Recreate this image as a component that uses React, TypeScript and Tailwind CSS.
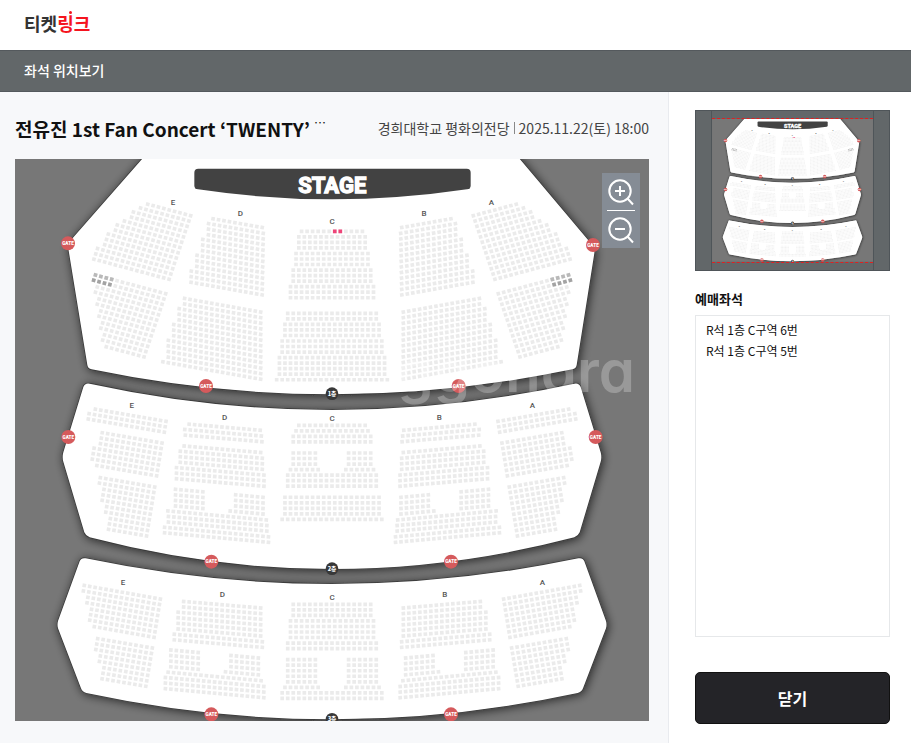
import React from 'react'

type Block = {
  x: number
  y: number
  // step from one seat to the next, and from one row to the next
  seat: [number, number]
  row: [number, number]
  // one entry per row: start, count pairs
  rows: number[][]
}

const CENTER = 951

const range = (counts: number[]) => counts.map((n) => (n ? [0, n] : []))
const centered = (counts: number[]) => counts.map((n) => (n ? [-(n - 1) / 2, n] : []))

// left half of the hall, anchored on the right end of the rows; mirrored for the right half
const sideBlocks: Block[] = [
  // 1F
  { x: 527, y: 170, seat: [-16.1, -4.3], row: [-5.4, 15.9], rows: range([9, 10, 11, 11, 12, 13, 13, 14, 14, 14, 15, 15, 15]) },
  { x: 452, y: 404, seat: [-16.2, -4.3], row: [-5.4, 15.8], rows: range([14, 14, 13, 13, 12, 12, 11, 11, 10, 10, 9, 9, 8]) },
  { x: 745, y: 206, seat: [-16.4, -2.9], row: [-0.3, 16.8], rows: [[0.2, 10], ...range([11, 11, 11, 12, 12, 12, 13, 13, 13, 14, 14, 14])] },
  { x: 737, y: 459, seat: [-16.3, -2.9], row: [0, 16.8], rows: range([15, 15, 16, 16, 16, 17, 17, 17, 18, 18, 18, 18, 19]) },
  // 2F
  { x: 453, y: 787, seat: [-16.3, -2.8], row: [-2.5, 16.2], rows: range([14, 15, 15]) },
  { x: 441, y: 852, seat: [-16.3, -2.8], row: [-2.7, 16.4], rows: range([12, 12, 12, 13, 13, 13, 12]) },
  { x: 419, y: 984, seat: [-16.3, -2.8], row: [-2.7, 16.3], rows: range([11, 11, 10, 10, 10, 9, 9, 8, 8, 8]) },
  { x: 739, y: 814, seat: [-16.4, -1.4], row: [0, 17], rows: [[0.2, 14], [0, 15], [-0.1, 15]] },
  {
    x: 742, y: 881, seat: [-16.4, -1.4], row: [0, 16.7],
    rows: [[0.3, 15], [0, 16], [0, 16], [0, 16], [-0.3, 17], [-0.3, 17], [-0.3, 17]],
  },
  {
    x: 744, y: 1015, seat: [-16.4, -1.5], row: [0, 16.7],
    rows: [
      [0, 6, 11, 6], [0, 6, 11, 6], [0, 6, 11, 6], [0, 7, 11, 6],
      [-0.6, 19], [-0.7, 19], [-0.7, 19], [-1, 20], [-1, 20],
    ],
  },
  // 3F
  { x: 436, y: 1320, seat: [-16.3, -2.9], row: [-2.7, 16.4], rows: range([15, 15, 14, 14, 13, 13, 13, 12]) },
  { x: 412, y: 1467, seat: [-16.4, -2.8], row: [-2.8, 16.4], rows: range([11, 11, 11, 10, 10, 9, 9, 9]) },
  {
    x: 737, y: 1347, seat: [-16.5, -1.4], row: [0, 16.8],
    rows: [[0, 15], [0, 15], [0, 16], [0, 16], [0, 16], [0, 16], [-0.3, 17], [-0.3, 17]],
  },
  {
    x: 730, y: 1497, seat: [-16.4, -1.5], row: [0, 16.8],
    rows: [
      [0, 6, 11, 6], [0, 6, 11, 6], [0, 6, 11, 6], [0, 7, 11, 6],
      [-0.5, 18], [-1, 19], [-1, 19], [-1, 19],
    ],
  },
]

const centerBlocks: Block[] = [
  { x: CENTER, y: 217, seat: [16.6, 0], row: [0, 16.6], rows: centered([12, 13, 13, 13, 14, 14, 14, 15, 15, 15, 16, 16, 16]) },
  { x: CENTER, y: 463, seat: [16.6, 0], row: [0, 16.6], rows: centered([17, 17, 18, 18, 18, 19, 19, 19, 20, 20, 20, 20, 21]) },
  {
    x: CENTER, y: 799, seat: [16.6, 0], row: [0, 16.6],
    rows: [
      ...centered([13, 14, 15, 15, 0]),
      [-7, 5, 3, 5], [-7, 5, 3, 5], [-7, 5, 3, 5], [-7.5, 6, 2.5, 6],
      ...centered([17, 17, 17, 0, 18, 18, 18, 18, 19]),
    ],
  },
  {
    x: CENTER, y: 1336, seat: [16.6, 0], row: [0, 16.6],
    rows: [
      ...centered([15, 15, 15, 16, 16, 16, 16, 17, 17, 0]),
      [-8, 6, 3, 6], [-8, 6, 3, 6], [-8, 6, 3, 6], [-8, 6, 3, 6], [-8, 6, 3, 6], [-8.5, 7, 2.5, 7],
      ...centered([19, 19]),
    ],
  },
]

const SIZE = 11

function seatPath(block: Block, rows = block.rows) {
  const [sx, sy] = block.seat
  const len = Math.hypot(sx, sy)
  const ux = (sx / len) * SIZE
  const uy = (sy / len) * SIZE
  let d = ''
  rows.forEach((segments, r) => {
    for (let i = 0; i < segments.length; i += 2) {
      for (let n = 0; n < segments[i + 1]; n++) {
        const c = segments[i] + n
        const x = block.x + r * block.row[0] + c * sx - (ux - uy) / 2
        const y = block.y + r * block.row[1] + c * sy - (uy + ux) / 2
        d += `M${x.toFixed(1)} ${y.toFixed(1)}l${ux.toFixed(1)} ${uy.toFixed(1)}l${(-uy).toFixed(1)} ${ux.toFixed(1)}l${(-ux).toFixed(1)} ${(-uy).toFixed(1)}z`
      }
    }
  })
  return d
}

const sideSeats = sideBlocks.map((b) => seatPath(b)).join('')
const centerSeats = centerBlocks.map((b) => seatPath(b)).join('')
const soldLight = seatPath(sideBlocks[1], [[10, 4]])
const soldDark = seatPath(sideBlocks[1], [[], [10, 4]])
const mySeats = seatPath(centerBlocks[0], [[0.5, 2]])

const floors = [
  'M390 -10L162 250Q158 262 161 275L217 618Q219 629 230 631Q951 781 1672 631Q1683 629 1685 618L1738 283Q1740 268 1730 256L1506 -10Z',
  'M205 684Q210 671 224 674Q951 832 1678 674Q1692 671 1697 684L1757 880Q1761 895 1757 908L1694 1120Q1690 1130 1678 1135Q951 1325 224 1135Q212 1130 208 1120L145 908Q141 895 145 880Z',
  'M194 1207Q199 1195 212 1198Q951 1352 1690 1198Q1703 1195 1708 1207L1773 1386Q1776 1397 1773 1408L1704 1588Q1700 1599 1688 1602Q951 1760 214 1602Q202 1599 198 1588L129 1408Q126 1397 129 1386Z',
]

const labels: [string, number, number][] = [
  ['E', 474, 138], ['D', 676, 172], ['C', 951, 196], ['B', 1227, 172], ['A', 1429, 138],
  ['E', 350, 746], ['D', 629, 782], ['C', 951, 786], ['B', 1273, 782], ['A', 1552, 748],
  ['E', 324, 1279], ['D', 622, 1315], ['C', 951, 1324], ['B', 1289, 1315], ['A', 1582, 1279],
]

const gates = [
  [159, 253], [573, 681], [1331, 681], [1734, 258],
  [160, 834], [1742, 834], [589, 1208], [1308, 1208],
  [589, 1666], [1308, 1666],
]

const levels: [string, number][] = [['1층', 704], ['2층', 1229], ['3층', 1681]]

function SeatMap({ id, seatColor = '#ebebeb' }: { id: string; seatColor?: string }) {
  return (
    <svg viewBox="0 0 1902 1686" className="block w-full" role="img" aria-label="좌석 배치도">
      <defs>
        <filter id={id} x="-10%" y="-20%" width="120%" height="140%">
          <feDropShadow dx="4" dy="4" stdDeviation="14" floodColor="#000" floodOpacity="0.65" />
        </filter>
      </defs>
      <rect width="1902" height="1686" fill="#777777" />
      {floors.map((d) => (
        <path key={d} d={d} fill="#ffffff" stroke="#3c3c3c" strokeWidth="5" filter={`url(#${id})`} />
      ))}
      {floors.map((d) => (
        <path key={d} d={d} fill="#ffffff" />
      ))}
      <path d="M550 29H1355Q1367 29 1367 41V80Q1367 89 1356 91Q951 151 549 91Q538 89 538 80V41Q538 29 550 29Z" fill="#424242" />
      <text x="952" y="101" textAnchor="middle" fill="#ffffff" stroke="#ffffff" strokeWidth="4" className="font-[Roboto,sans-serif] text-[66px] font-bold">STAGE</text>
      <g fill={seatColor}>
        <path d={centerSeats} />
        <path d={sideSeats} />
        <path d={sideSeats} transform="translate(1902 0) scale(-1 1)" />
      </g>
      {['', 'translate(1902 0) scale(-1 1)'].map((t) => (
        <g key={t} transform={t || undefined}>
          <path d={soldLight} fill="#b9b9b9" />
          <path d={soldDark} fill="#a3a3a3" />
        </g>
      ))}
      <path d={mySeats} fill="#ee4478" />
      {labels.map(([name, x, y]) => (
        <text key={`${x}-${y}`} x={x} y={y} textAnchor="middle" fill="#555555" className="font-[Roboto,sans-serif] text-[24px] font-medium">{name}</text>
      ))}
      {gates.map(([x, y]) => (
        <g key={`${x}-${y}`}>
          <circle cx={x} cy={y} r="21" fill="#d55a5c" />
          <text x={x} y={y + 5} textAnchor="middle" fill="#ffffff" className="font-[Roboto,sans-serif] text-[14px] font-black">GATE</text>
        </g>
      ))}
      {levels.map(([name, y]) => (
        <g key={name}>
          <circle cx={CENTER} cy={y} r="19" fill="#383838" />
          <text x={CENTER} y={y + 6} textAnchor="middle" fill="#ffffff" className="font-['Noto_Sans_CJK_KR',sans-serif] text-[17px] font-black">{name}</text>
        </g>
      ))}
    </svg>
  )
}

function ZoomIcon({ plus }: { plus?: boolean }) {
  return (
    <svg viewBox="0 0 28 28" className="h-7 w-7" fill="none" stroke="#ffffff" strokeWidth="2">
      <circle cx="13" cy="13" r="10.7" />
      <path d="M20.5 20.5L26 26.5M8 13h10" />
      {plus && <path d="M13 8v10" />}
    </svg>
  )
}

const seats = ['R석 1층 C구역 6번', 'R석 1층 C구역 5번']

function App() {
  return (
    <div className="bg-white font-['Noto_Sans_CJK_KR',sans-serif] text-[#111111]">
      {/* Logo */}
      <header className="flex h-[50px] items-center px-6 pb-1">
        <a href="#" className="relative text-[18px] leading-6 font-bold text-[#333333]">
          티켓<span className="text-[#f5141e]">링크</span>
          <span className="absolute top-0 left-[45px] h-[3px] w-[3px] rounded-full bg-[#f5141e]" />
        </a>
      </header>

      <div className="flex h-[42px] items-center border-y border-[#54595d] bg-[#626769] px-6 pb-0.5">
        <h1 className="text-[14px] leading-5 font-medium text-white">좌석 위치보기</h1>
      </div>

      <div className="flex">
        {/* Seat map */}
        <main className="min-w-0 flex-1 bg-[#f7f8fa] pt-5 pr-[19px] pb-[22px] pl-[15px]">
          <div className="mb-4 flex h-[31px] items-center justify-between">
            <h2 className="flex items-start pt-0.5 text-[19px] leading-7 font-bold whitespace-nowrap">
              전유진 1st Fan Concert ‘TWENTY’
              <span className="ml-1 text-[12px] leading-4 font-normal">…</span>
            </h2>
            <p className="flex items-center text-[14px] leading-5 whitespace-nowrap text-[#444444]">
              경희대학교 평화의전당
              <span className="mx-1 h-3 w-px bg-[#888888]" />
              2025.11.22(토) 18:00
            </p>
          </div>

          <div className="relative">
            <SeatMap id="map-shadow" />
            <span className="pointer-events-none absolute top-[176px] right-3.5 font-[Inter,sans-serif] text-[58px] leading-[72px] font-semibold text-white/25 [font-feature-settings:'cv11']">
              ggonara
            </span>
            <div className="absolute top-3.5 right-[9px] flex w-[38px] flex-col items-center bg-[#858c95]">
              <button type="button" aria-label="확대" className="flex h-[37px] w-full items-center justify-center">
                <ZoomIcon plus />
              </button>
              <span className="h-px w-7 bg-white" />
              <button type="button" aria-label="축소" className="flex h-[37px] w-full items-center justify-center">
                <ZoomIcon />
              </button>
            </div>
          </div>
        </main>

        {/* Sidebar */}
        <aside className="flex w-[243px] flex-col border-l border-[#e9ebef] pt-[18px] pr-[21px] pb-[19px] pl-[26px]">
          <div className="flex h-[161px] justify-center border border-[#4f5559] bg-[#626769]">
            <div className="flex w-[163px] flex-col border-x border-[#4f5559] py-[7px]">
              <div className="border-y border-dashed border-[#e02020]">
                <SeatMap id="mini-shadow" seatColor="#f1f1f1" />
              </div>
            </div>
          </div>

          <h3 className="mt-[17px] mb-1.5 text-[13px] leading-[21px] font-bold">예매좌석</h3>
          <ul className="flex-1 border border-[#e6e8ea] px-2.5 py-[3px] text-[12px] leading-[21px]">
            {seats.map((seat) => (
              <li key={seat}>{seat}</li>
            ))}
          </ul>

          <button type="button" className="mt-[35px] h-[52px] rounded-[5px] border border-[#111111] bg-[#242428] text-[16px] font-bold text-white">
            닫기
          </button>
        </aside>
      </div>
    </div>
  )
}

export default App
